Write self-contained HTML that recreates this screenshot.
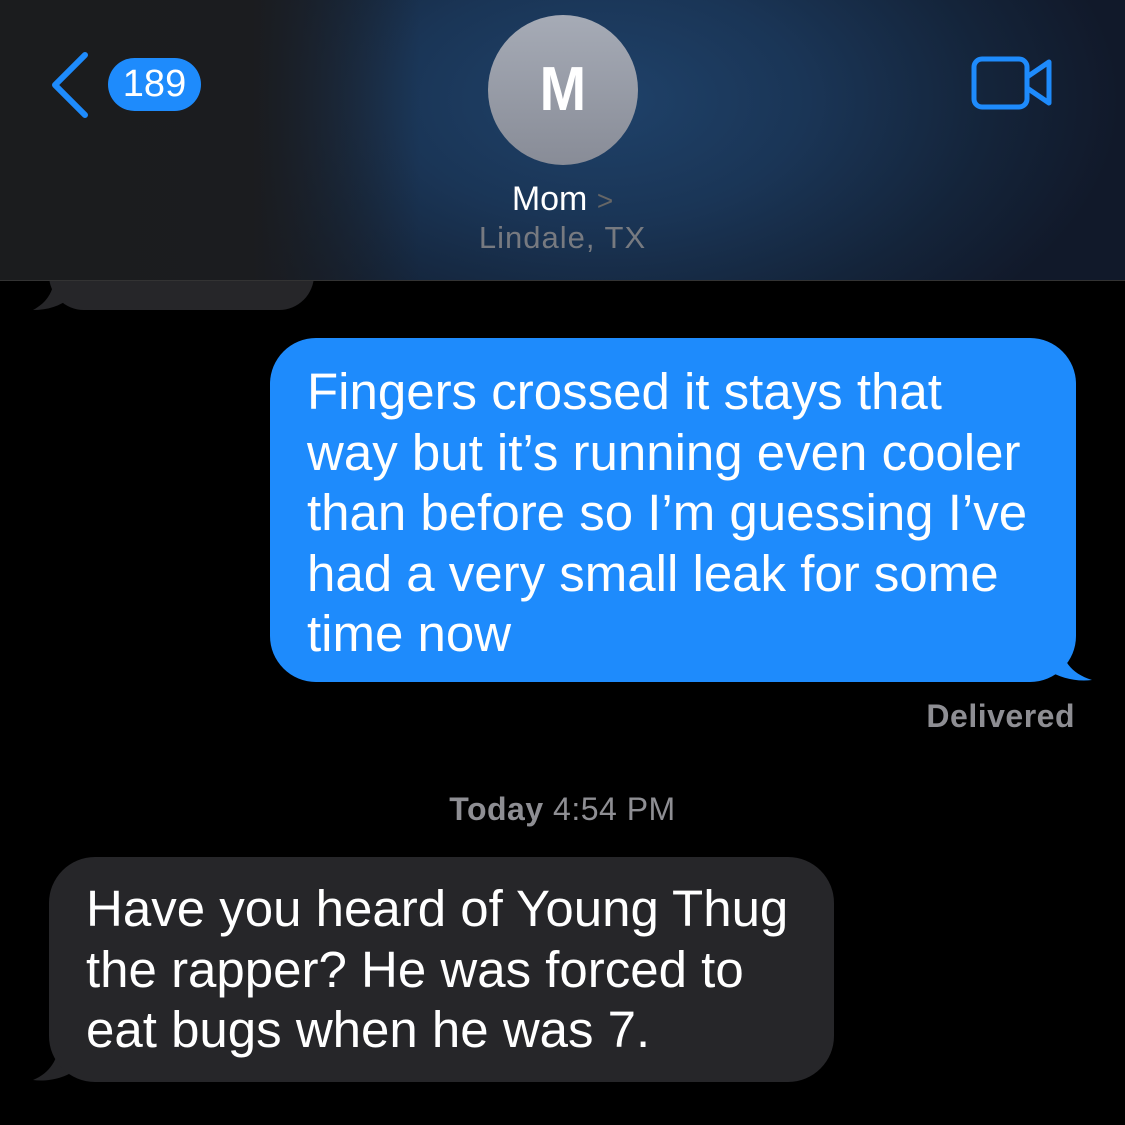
<!DOCTYPE html>
<html><head><meta charset="utf-8"><style>
body{margin:0;width:1125px;height:1125px;background:#000;overflow:hidden;position:relative;font-family:"Liberation Sans",sans-serif}
.hdr{position:absolute;left:0;top:0;width:1125px;height:280px;background:radial-gradient(ellipse 520px 300px at 600px 100px,#1f426a 0%,#1a3556 40%,#14243a 75%,#11192a 100%);border-bottom:1px solid #333}
.hdrl{position:absolute;left:0;top:0;width:420px;height:280px;background:linear-gradient(90deg,#1b1c1e 0%,#1b1c1f 60%,rgba(27,28,31,0) 100%)}
.b{position:absolute;font-size:51px;line-height:60.5px;color:#fff}
.blue{left:270px;top:338px;width:806px;height:344px;background:#1e8bfc;border-radius:46px;box-sizing:border-box;padding:24px 0 0 37px}
.gray{left:49px;top:857px;width:785px;height:225px;background:#262629;border-radius:46px;box-sizing:border-box;padding:22px 0 0 37px}
</style></head><body>
<div style="position:absolute;left:49px;top:240px;width:265px;height:70px;background:#262629;border-radius:40px"></div>
<svg style="position:absolute;left:30px;top:270px" width="40" height="45"><path d="M25 0 C25 20 18 32 3 40 C18 40 30 36 40 28 Z" fill="#262629"/></svg>
<div class="hdr"><div class="hdrl"></div></div>
<svg style="position:absolute;left:45px;top:50px" width="50" height="70"><path d="M40 5 L10 35 L40 65" stroke="#1e8bfc" stroke-width="6" fill="none" stroke-linecap="round" stroke-linejoin="round"/></svg>
<div style="position:absolute;left:108px;top:58px;width:93px;height:53px;background:#1e8bfc;border-radius:27px;color:#fff;font-size:38px;line-height:53px;text-align:center">189</div>
<div style="position:absolute;left:488px;top:15px;width:150px;height:150px;border-radius:50%;background:linear-gradient(#a6abb6,#888c97);color:#fff;font-size:62px;font-weight:bold;line-height:150px;text-align:center"><span style="display:inline-block;transform:scaleX(0.9)">M</span></div>
<div style="position:absolute;left:0;width:1125px;top:180px;text-align:center;color:#fff;font-size:34px">Mom <span style="color:#666;font-size:28px">&gt;</span></div>
<div style="position:absolute;left:0;width:1125px;top:220px;text-align:center;color:#777a80;font-size:31px;letter-spacing:1px">Lindale, TX</div>
<svg style="position:absolute;left:970px;top:55px" width="85" height="55"><rect x="4" y="4" width="53" height="48" rx="8" fill="none" stroke="#1e8bfc" stroke-width="5"/><path d="M57 22 L79 7 L79 48 L57 33" fill="none" stroke="#1e8bfc" stroke-width="5" stroke-linejoin="round"/></svg>
<svg style="position:absolute;left:1040px;top:640px" width="56" height="45"><path d="M20 0 C22 20 30 33 52 40 C36 42 20 38 8 30 Z" fill="#1e8bfc"/></svg>
<div class="b blue">Fingers crossed it stays that<br>way but it’s running even cooler<br>than before so I’m guessing I’ve<br>had a very small leak for some<br>time now</div>
<div style="position:absolute;right:50px;top:698px;color:#8e8e93;font-size:32px;font-weight:bold;letter-spacing:0.5px">Delivered</div>
<div style="position:absolute;left:0;width:1125px;top:791px;text-align:center;color:#8e8e93;font-size:32px;letter-spacing:0.5px"><b>Today</b> 4:54 PM</div>
<svg style="position:absolute;left:30px;top:1040px" width="50" height="45"><path d="M30 0 C28 20 20 33 3 40 C18 42 35 38 45 30 Z" fill="#262629"/></svg>
<div class="b gray">Have you heard of Young Thug<br>the rapper? He was forced to<br>eat bugs when he was 7.</div>
</body></html>
